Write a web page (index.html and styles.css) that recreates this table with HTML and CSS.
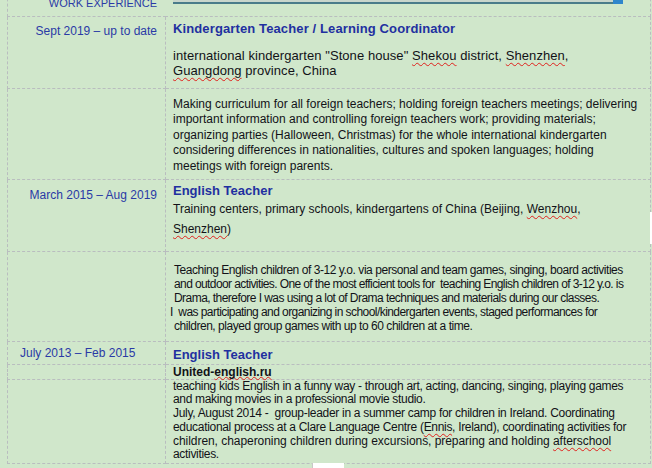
FILE: index.html
```html
<!DOCTYPE html>
<html>
<head>
<meta charset="utf-8">
<link rel="stylesheet" href="styles.css">
</head>
<body>
<div class="page">
  <table class="cv">
    <colgroup>
      <col class="col-date">
      <col class="col-main">
    </colgroup>
    <tr class="r-head">
      <td colspan="2" class="head-cell">
        <div class="head">
          <div class="head-title">WORK EXPERIENCE</div>
          <div class="head-rule"><span class="rule-box"></span></div>
        </div>
      </td>
    </tr>
    <tr class="r1">
      <td class="date">Sept 2019 – up to date</td>
      <td class="main">
        <div class="job job-1">Kindergarten Teacher / Learning Coordinator</div>
        <p class="place p1">international kindergarten "Stone house" <span class="sp">Shekou</span> district, <span class="sp">Shenzhen</span>,<br><span class="sp">Guangdong</span> province, China</p>
      </td>
    </tr>
    <tr class="r2">
      <td class="date"></td>
      <td class="main">
        <p class="desc d2"><span class="ln">Making curriculum for all foreign teachers; holding foreign teachers meetings; delivering</span><span class="ln">important information and controlling foreign teachers work; providing materials;</span><span class="ln">organizing parties (Halloween, Christmas) for the whole international kindergarten</span><span class="ln">considering differences in nationalities, cultures and spoken languages; holding</span><span class="ln">meetings with foreign parents.</span></p>
      </td>
    </tr>
    <tr class="r3">
      <td class="date">March 2015 – Aug 2019</td>
      <td class="main">
        <div class="job job-3">English Teacher</div>
        <p class="place p3">Training centers, primary schools, kindergartens of China (Beijing, <span class="sp">Wenzhou</span>,<br><span class="sp">Shenzhen</span>)</p>
      </td>
    </tr>
    <tr class="r4">
      <td class="date"></td>
      <td class="main">
        <p class="desc d4"><span class="ln ls-45">Teaching English children of 3-12 y.o. via personal and team games, singing, board activities</span><span class="ln ls-60">and outdoor activities. One of the most efficient tools for&nbsp; teaching English children of 3-12 y.o. is</span><span class="ln ls-55">Drama, therefore I was using a lot of Drama techniques and materials during our classes.</span><span class="ln ls-56 out">I&nbsp; was participating and organizing in school/kindergarten events, staged performances for</span><span class="ln ls-46">children, played group games with up to 60 children at a time.</span></p>
      </td>
    </tr>
    <tr class="r5">
      <td class="date date-left">July 2013 – Feb 2015</td>
      <td class="main"><div class="job job-5">English Teacher</div></td>
    </tr>
    <tr class="r6">
      <td class="date"></td>
      <td class="main"><div class="site">United-<span class="sp sp-tight">english.ru</span></div></td>
    </tr>
    <tr class="r7">
      <td class="date"></td>
      <td class="main">
        <p class="desc d7"><span class="ln ls-30">teaching kids English in a funny way - through art, acting, dancing, singing, playing games</span><span class="ln ls-32">and making movies in a professional movie studio.</span><span class="ln ls-30">July, August 2014 -&nbsp; group-leader in a summer camp for children in Ireland. Coordinating</span><span class="ln ls-31">educational process at a Clare Language Centre (<span class="sp">Ennis</span>, Ireland), coordinating activities for</span><span class="ln ls-05">children, chaperoning children during excursions, preparing and holding <span class="sp">afterschool</span></span><span class="ln ls-32">activities.</span></p>
      </td>
    </tr>
  </table>
  <div class="side-tab"></div>
  <div class="bottom-tab"></div>
</div>
</body>
</html>
```
FILE: styles.css
```css
html, body {
  margin: 0;
  padding: 0;
  background: #d0e7cb;
}
body {
  font-family: "Liberation Sans", Arial, sans-serif;
  color: #121218;
  width: 652px;
  height: 468px;
  overflow: hidden;
}
.page {
  position: relative;
  width: 652px;
  height: 468px;
  overflow: hidden;
}
.cv {
  border-collapse: collapse;
  margin-left: 7px;
  margin-top: -12px;
  width: 643px;
  table-layout: fixed;
}
.col-date { width: 158px; }
.col-main { width: 485px; }
.cv td {
  border: 1px dashed #b9bdbf;
  vertical-align: top;
  padding: 0;
}
.cv td.date {
  padding-right: 8px;
  text-align: right;
  font-size: 12px;
  line-height: 15px;
  color: #2a3aa6;
  white-space: nowrap;
}
.cv td.main {
  padding-left: 7px;
  padding-right: 2px;
  white-space: nowrap;
}
.r-head { height: 28px; }
.r1 { height: 72px; }
.r2 { height: 91px; }
.r3 { height: 72px; }
.r4 { height: 90px; }
.r5 { height: 23px; }
.r6 { height: 15px; }
.r7 { height: 84px; }

.head-cell { border-top: none !important; }
.head {
  display: flex;
  align-items: flex-start;
}
.head-title {
  width: 149px;
  text-align: right;
  font-size: 11px;
  line-height: 15px;
  color: #2a3aa6;
  padding-top: 8px;
}
.head-rule {
  margin-left: 16px;
  width: 440px;
  height: 13px;
  margin-top: 1px;
  background: #c9d6cc;
  border-bottom: 2px solid #4a7c8a;
  position: relative;
}
.rule-box {
  position: absolute;
  right: -10px;
  bottom: -2px;
  width: 10px;
  height: 16px;
  background: #2f86cc;
}

.job {
  font-weight: bold;
  font-size: 13px;
  line-height: 16px;
  color: #1f30a0;
}
.job-1 { padding-top: 4px; letter-spacing: 0.12px; }
.r1 .date { padding-top: 7px; }
.place {
  margin: 0;
  font-size: 12px;
  line-height: 15px;
}
.p1 {
  font-size: 13px;
  margin-top: 11px;
  letter-spacing: 0.07px;
}
.r3 .date { padding-top: 8px; }
.job-3 { padding-top: 3px; }
.p3 { line-height: 20px; }

.desc {
  margin: 0;
  font-size: 12px;
}
.ln { display: block; }
.ls-60 { letter-spacing: -0.6px; }
.ls-56 { letter-spacing: -0.56px; }
.ls-55 { letter-spacing: -0.55px; }
.ls-46 { letter-spacing: -0.46px; }
.ls-45 { letter-spacing: -0.45px; }
.ls-32 { letter-spacing: -0.32px; }
.ls-31 { letter-spacing: -0.31px; }
.ls-30 { letter-spacing: -0.3px; }
.ls-05 { letter-spacing: -0.05px; }
.d2 {
  padding-top: 8px;
  line-height: 15.5px;
}
.d4 {
  padding-top: 11px;
  padding-left: 1px;
  line-height: 14px;
}
.d4 .out { margin-left: -4px; }
.cv td.date-left {
  text-align: left;
  padding-left: 12px;
  padding-right: 0;
  padding-top: 4px;
}
.job-5 { padding-top: 5px; }
.site {
  font-weight: bold;
  font-size: 12px;
  line-height: 12px;
  padding-top: 1px;
  color: #121218;
}
.d7 {
  line-height: 13.8px;
}
.sp {
  text-decoration: underline wavy #e0201c;
  text-decoration-thickness: 1px;
  text-underline-offset: 2px;
  text-decoration-skip-ink: none;
}
.sp-tight { text-underline-offset: 0px; }
.side-tab {
  position: absolute;
  left: 650px;
  top: 212px;
  width: 2px;
  height: 32px;
  background: #ffffff;
}
.bottom-tab {
  position: absolute;
  left: 312px;
  top: 463px;
  width: 31px;
  height: 5px;
  background: #ffffff;
  border-left: 1px solid #c8c8c8;
}
```
